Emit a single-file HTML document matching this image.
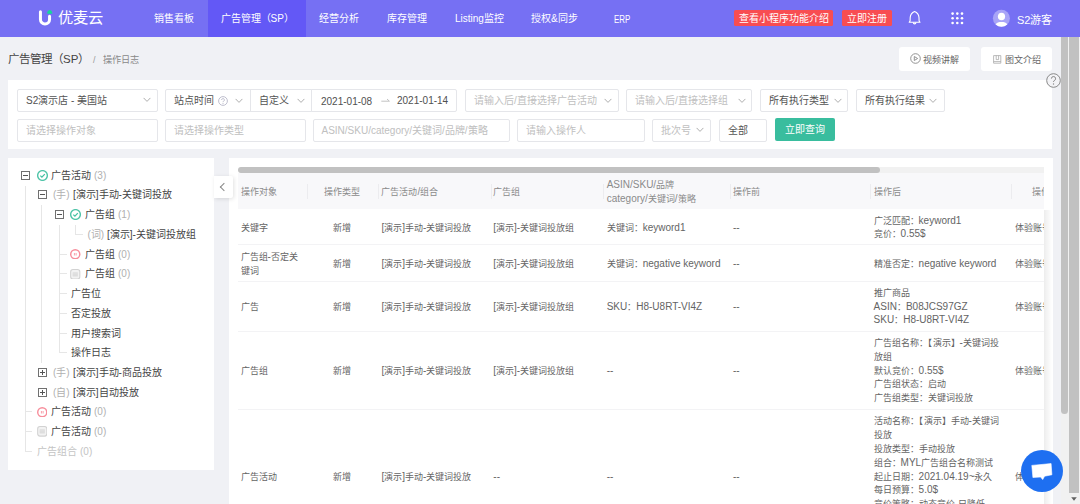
<!DOCTYPE html>
<html lang="zh-CN"><head><meta charset="utf-8">
<style>
*{margin:0;padding:0;box-sizing:border-box}
html,body{width:1080px;height:504px;overflow:hidden;background:#f0f1f5;font-family:"Liberation Sans",sans-serif;color:#333}
.a{position:absolute;white-space:nowrap}
#hdr{position:absolute;left:0;top:0;width:1080px;height:37.4px;background:#7670f3}
#hdr .act{position:absolute;left:208px;top:0;width:97.6px;height:37.4px;background:#6358f6}
.nav{position:absolute;top:11px;font-size:10px;line-height:16px;color:#fff}
.rbtn{position:absolute;top:9.7px;height:16.6px;background:#f84d52;border-radius:1.5px;color:#fff;font-size:10px;line-height:16.6px;padding-top:1px;text-align:center}
.panel{position:absolute;background:#fff}
.inp{position:absolute;height:23px;border:1px solid #e5e6ea;border-radius:2px;background:#fff;font-size:10px;line-height:21px;padding-left:8px;color:#535353;white-space:nowrap;overflow:hidden}
.ph{color:#c0c0c0}
.L{font-size:10px;line-height:0}
.btn2{position:absolute;top:47px;height:24px;background:#fff;border-radius:3px;font-size:9px;line-height:24px;color:#666}
</style></head><body>
<div id="hdr">
  <div class="act"></div>
  <svg class="a" style="left:37px;top:9px" width="17" height="18" viewBox="0 0 17 18">
    <path d="M3.45 2.8 V10.45 A4.55 4.55 0 0 0 12.55 10.45 V7.3" fill="none" stroke="#fff" stroke-width="3" stroke-linecap="round"/>
    <path d="M10.1 4.6 C10.1 2.2 11.5 1 12.7 1 C13.9 1 15.3 2.2 15.3 4.6 Q12.7 5.4 10.1 4.6 Z" fill="#16d69c"/>
  </svg>
  <div class="a" style="left:57.5px;top:7.6px;font-size:15.3px;line-height:20px;color:#fff">优麦云</div>
  <div class="nav" style="left:154px">销售看板</div>
  <div class="nav" style="left:220.5px">广告管理（SP）</div>
  <div class="nav" style="left:319px">经营分析</div>
  <div class="nav" style="left:387px">库存管理</div>
  <div class="nav" style="left:455px">Listing监控</div>
  <div class="nav" style="left:531px">授权&amp;同步</div>
  <div class="nav" style="left:613.5px;top:11px;font-size:11px;transform:scaleX(0.72);transform-origin:0 0">ERP</div>
  <div class="rbtn" style="left:734px;width:99px">查看小程序功能介绍</div>
  <div class="rbtn" style="left:842px;width:50px">立即注册</div>
  <svg class="a" style="left:907px;top:10px" width="15" height="16" viewBox="0 0 15 16">
    <path d="M7.6 1.6 C5.2 2.6 3.4 4.6 3.2 7.6 L3.1 10.9 L2.2 12.2 H13 L12.1 10.9 L12 7.6 C11.8 4.6 10 2.6 7.6 1.6 Z" fill="none" stroke="#fff" stroke-width="1.1" stroke-linejoin="round"/>
    <path d="M6.3 12.6 A1.3 1.3 0 0 0 8.9 12.6" fill="none" stroke="#fff" stroke-width="1.1"/>
  </svg>
  <svg class="a" style="left:951px;top:12px" width="13" height="13" viewBox="0 0 13 13" fill="#fff">
    <circle cx="1.6" cy="1.6" r="1.3"/><circle cx="6.3" cy="1.6" r="1.3"/><circle cx="11" cy="1.6" r="1.3"/>
    <circle cx="1.6" cy="6.3" r="1.3"/><circle cx="6.3" cy="6.3" r="1.3"/><circle cx="11" cy="6.3" r="1.3"/>
    <circle cx="1.6" cy="11" r="1.3"/><circle cx="6.3" cy="11" r="1.3"/><circle cx="11" cy="11" r="1.3"/>
  </svg>
  <svg class="a" style="left:992px;top:9px" width="18" height="18" viewBox="0 0 18 18">
    <circle cx="9.4" cy="9.2" r="8.5" fill="#a8a4f7"/>
    <ellipse cx="9.5" cy="7.5" rx="3.6" ry="3.8" fill="#fff"/>
    <path d="M3.6 15.4 C4.6 13.6 6.8 13 9.5 13 C12.2 13 14.4 13.6 15.3 15.4 A8.5 8.5 0 0 1 3.6 15.4 Z" fill="#fff"/>
  </svg>
  <div class="nav" style="left:1017px;top:11.7px;font-size:11px">S2游客</div>
</div>

<!-- breadcrumb -->
<div class="a" style="left:8px;top:51px;font-size:11.5px;line-height:17px;color:#444">广告管理（SP）</div>
<div class="a" style="left:93px;top:53px;font-size:9px;line-height:14px;color:#999">/</div><div class="a" style="left:102.5px;top:53px;font-size:9.2px;line-height:14px;color:#888">操作日志</div>
<div class="btn2" style="left:899px;width:71px"><svg class="a" style="left:10.5px;top:6.2px" width="11" height="11" viewBox="0 0 11 11"><circle cx="5.5" cy="5.5" r="4.8" fill="none" stroke="#888" stroke-width="0.9"/><path d="M4.3 3.5 L7.6 5.5 L4.3 7.5 Z" fill="none" stroke="#888" stroke-width="0.9" stroke-linejoin="round"/></svg><span class="a" style="left:23.5px;top:1.2px">视频讲解</span></div>
<div class="btn2" style="left:981px;width:71px"><svg class="a" style="left:11.5px;top:8px" width="9" height="9" viewBox="0 0 9 9"><path d="M0.6 0.6 H7.8 V8.2 H0.6 Z" fill="none" stroke="#aaa" stroke-width="0.8"/><path d="M3.2 0.6 V4.6 H5.6 V0.6" fill="none" stroke="#aaa" stroke-width="0.8"/><path d="M0.6 6.6 H7.8" stroke="#aaa" stroke-width="0.8"/></svg><span class="a" style="left:24px;top:1.2px">图文介绍</span></div>

<!-- filter panel -->
<div class="panel" style="left:8px;top:80px;width:1044px;height:69px"></div>
<svg class="a" style="left:1045.5px;top:73px;z-index:2" width="15" height="15" viewBox="0 0 15 15"><circle cx="7.5" cy="7.5" r="6.8" fill="#f3f3f6" stroke="#888" stroke-width="1"/><path d="M5.4 5.6 A2.1 2.1 0 1 1 8.2 7.6 Q7.5 8 7.5 9" fill="none" stroke="#888" stroke-width="1"/><circle cx="7.5" cy="11" r="0.7" fill="#888"/></svg><!--x-->


<!-- filter row 1 -->
<div class="inp" style="left:17px;top:89px;width:141px">S2演示店 - 美国站</div>
<div class="inp" style="left:165px;top:89px;width:86px;border-radius:2px 0 0 2px">站点时间<svg class="a" style="left:52px;top:6px" width="10" height="10" viewBox="0 0 10 10"><circle cx="5" cy="5" r="4.4" fill="none" stroke="#b8b8c8" stroke-width="0.9"/><path d="M3.6 4 A1.4 1.4 0 1 1 5.4 5.3 Q5 5.5 5 6.2" fill="none" stroke="#b8b8c8" stroke-width="0.9"/><circle cx="5" cy="7.6" r="0.55" fill="#b8b8c8"/></svg></div>
<div class="inp" style="left:250px;top:89px;width:62px;border-radius:0">自定义</div>
<div class="inp" style="left:311px;top:89px;width:146px;border-radius:0 2px 2px 0;padding-left:9px;padding-top:1px;color:#505050">2021-01-08<svg style="position:absolute;left:68.5px;top:8px" width="9" height="5" viewBox="0 0 9 5"><path d="M0.3 3.2 H8.4 L6 1" fill="none" stroke="#bbb" stroke-width="0.9"/></svg><span style="position:absolute;left:85px;top:0">2021-01-14</span></div>
<div class="inp ph" style="left:465px;top:89px;width:154px">请输入后/直接选择广告活动</div>
<div class="inp ph" style="left:626px;top:89px;width:126px">请输入后/直接选择组</div>
<div class="inp" style="left:760px;top:89px;width:88px">所有执行类型</div>
<div class="inp" style="left:856px;top:89px;width:89px">所有执行结果</div>
<!-- filter row 2 -->
<div class="inp ph" style="left:17px;top:118.5px;width:141px">请选择操作对象</div>
<div class="inp ph" style="left:165px;top:118.5px;width:141px">请选择操作类型</div>
<div class="inp ph" style="left:312.5px;top:118.5px;width:197px">ASIN/SKU/category/关键词/品牌/策略</div>
<div class="inp ph" style="left:516.5px;top:118.5px;width:128px">请输入操作人</div>
<div class="inp ph" style="left:652px;top:118.5px;width:59px">批次号</div>
<div class="inp" style="left:718.5px;top:118.5px;width:48px;color:#555">全部</div>
<div class="a" style="left:774.5px;top:118.3px;width:60px;height:22.5px;background:#39bd9e;border-radius:2px;color:#fff;font-size:10px;line-height:22.5px;padding-top:1px;text-align:center">立即查询</div>

<svg class="a" style="left:142.8px;top:97.3px" width="8" height="6" viewBox="0 0 8 6"><path d="M0.6 0.9 L4 4.4 L7.4 0.9" fill="none" stroke="#adadad" stroke-width="1"/></svg>
<svg class="a" style="left:235.4px;top:97.6px" width="8" height="6" viewBox="0 0 8 6"><path d="M0.6 0.9 L4 4.4 L7.4 0.9" fill="none" stroke="#adadad" stroke-width="1"/></svg>
<svg class="a" style="left:296.5px;top:97.6px" width="8" height="6" viewBox="0 0 8 6"><path d="M0.6 0.9 L4 4.4 L7.4 0.9" fill="none" stroke="#adadad" stroke-width="1"/></svg>
<svg class="a" style="left:603.9px;top:97.6px" width="8" height="6" viewBox="0 0 8 6"><path d="M0.6 0.9 L4 4.4 L7.4 0.9" fill="none" stroke="#adadad" stroke-width="1"/></svg>
<svg class="a" style="left:737.5px;top:97.6px" width="8" height="6" viewBox="0 0 8 6"><path d="M0.6 0.9 L4 4.4 L7.4 0.9" fill="none" stroke="#adadad" stroke-width="1"/></svg>
<svg class="a" style="left:833.7px;top:97.6px" width="8" height="6" viewBox="0 0 8 6"><path d="M0.6 0.9 L4 4.4 L7.4 0.9" fill="none" stroke="#adadad" stroke-width="1"/></svg>
<svg class="a" style="left:929.0px;top:97.6px" width="8" height="6" viewBox="0 0 8 6"><path d="M0.6 0.9 L4 4.4 L7.4 0.9" fill="none" stroke="#adadad" stroke-width="1"/></svg>
<svg class="a" style="left:695.5px;top:127.1px" width="8" height="6" viewBox="0 0 8 6"><path d="M0.6 0.9 L4 4.4 L7.4 0.9" fill="none" stroke="#adadad" stroke-width="1"/></svg>
<!-- tree panel -->
<div class="panel" style="left:8px;top:157.5px;width:206px;height:312px"></div>

<div class="a" style="left:24.5px;top:186px;width:1px;height:265.5px;background:#e6e6e6"></div>
<div class="a" style="left:41px;top:205px;width:1px;height:157.5px;background:#e6e6e6"></div>
<div class="a" style="left:58.5px;top:225px;width:1px;height:127.5px;background:#e6e6e6"></div>
<div class="a" style="left:75px;top:225px;width:1px;height:9.5px;background:#e6e6e6"></div>
<div class="a" style="left:75px;top:233.9px;width:8px;height:1px;background:#e6e6e6"></div>
<div class="a" style="left:58.5px;top:253.6px;width:8.0px;height:1px;background:#e6e6e6"></div>
<div class="a" style="left:58.5px;top:273.3px;width:8.0px;height:1px;background:#e6e6e6"></div>
<div class="a" style="left:58.5px;top:293.0px;width:8.0px;height:1px;background:#e6e6e6"></div>
<div class="a" style="left:58.5px;top:312.7px;width:8.0px;height:1px;background:#e6e6e6"></div>
<div class="a" style="left:58.5px;top:332.5px;width:8.0px;height:1px;background:#e6e6e6"></div>
<div class="a" style="left:58.5px;top:352.2px;width:8.0px;height:1px;background:#e6e6e6"></div>
<div class="a" style="left:24.5px;top:411.3px;width:7.5px;height:1px;background:#e6e6e6"></div>
<div class="a" style="left:24.5px;top:431.1px;width:7.5px;height:1px;background:#e6e6e6"></div>
<div class="a" style="left:24.5px;top:450.8px;width:7.5px;height:1px;background:#e6e6e6"></div>
<div class="a" style="left:21px;top:170.7px;width:9px;height:9px;border:1px solid #707070;background:#fff"><i style="position:absolute;left:1px;top:3px;width:5px;height:1px;background:#555"></i></div>
<svg class="a" style="left:36.5px;top:169.9px" width="11" height="11" viewBox="0 0 11 11"><circle cx="5.5" cy="5.5" r="4.85" fill="none" stroke="#4fc4a8" stroke-width="1.4"/><path d="M3.3 5.6 L4.9 7.1 L7.8 4.1" fill="none" stroke="#45c2a3" stroke-width="1.3"/></svg>
<div class="a" style="left:51px;top:168.7px;font-size:10px;line-height:14px;color:#444">广告活动</div>
<div class="a" style="left:94px;top:168.7px;font-size:10px;line-height:14px;color:#b0b0b0">(3)</div>
<div class="a" style="left:38px;top:190.4px;width:9px;height:9px;border:1px solid #707070;background:#fff"><i style="position:absolute;left:1px;top:3px;width:5px;height:1px;background:#555"></i></div>
<div class="a" style="left:53px;top:188.4px;font-size:10px;line-height:14px;color:#b0b0b0">(手)</div>
<div class="a" style="left:73px;top:188.4px;font-size:10px;line-height:14px;color:#444">[演示]手动-关键词投放</div>
<div class="a" style="left:55px;top:210.1px;width:9px;height:9px;border:1px solid #707070;background:#fff"><i style="position:absolute;left:1px;top:3px;width:5px;height:1px;background:#555"></i></div>
<svg class="a" style="left:70.3px;top:209.4px" width="11" height="11" viewBox="0 0 11 11"><circle cx="5.5" cy="5.5" r="4.85" fill="none" stroke="#4fc4a8" stroke-width="1.4"/><path d="M3.3 5.6 L4.9 7.1 L7.8 4.1" fill="none" stroke="#45c2a3" stroke-width="1.3"/></svg>
<div class="a" style="left:85px;top:208.1px;font-size:10px;line-height:14px;color:#444">广告组</div>
<div class="a" style="left:118px;top:208.1px;font-size:10px;line-height:14px;color:#b0b0b0">(1)</div>
<div class="a" style="left:87.5px;top:227.9px;font-size:10px;line-height:14px;color:#b0b0b0">(词)</div>
<div class="a" style="left:107px;top:227.9px;font-size:10px;line-height:14px;color:#444">[演示]-关键词投放组</div>
<svg class="a" style="left:70.3px;top:248.8px" width="10.5" height="10.5" viewBox="0 0 11 11"><circle cx="5.5" cy="5.5" r="4.75" fill="none" stroke="#f78d9b" stroke-width="1.5"/><path d="M4.6 4.2 V6.8 M6.4 4.2 V6.8" fill="none" stroke="#f78d9b" stroke-width="0.9"/></svg>
<div class="a" style="left:85px;top:247.6px;font-size:10px;line-height:14px;color:#444">广告组</div>
<div class="a" style="left:118px;top:247.6px;font-size:10px;line-height:14px;color:#b0b0b0">(0)</div>
<svg class="a" style="left:70.3px;top:268.5px" width="10.5" height="10.5" viewBox="0 0 11 11"><rect x="0.7" y="0.6" width="9.6" height="10" rx="2.4" fill="#f2f2f2" stroke="#d2d2d2" stroke-width="1.1"/><rect x="2.8" y="3.6" width="5.4" height="4.2" fill="#d9d9d9"/><path d="M2.8 5 H8.2 M2.8 6.4 H8.2" stroke="#ececec" stroke-width="0.5"/></svg>
<div class="a" style="left:85px;top:267.3px;font-size:10px;line-height:14px;color:#444">广告组</div>
<div class="a" style="left:118px;top:267.3px;font-size:10px;line-height:14px;color:#b0b0b0">(0)</div>
<div class="a" style="left:70.5px;top:287.0px;font-size:10px;line-height:14px;color:#444">广告位</div>
<div class="a" style="left:70.5px;top:306.7px;font-size:10px;line-height:14px;color:#444">否定投放</div>
<div class="a" style="left:70.5px;top:326.5px;font-size:10px;line-height:14px;color:#444">用户搜索词</div>
<div class="a" style="left:70.5px;top:346.2px;font-size:10px;line-height:14px;color:#444">操作日志</div>
<div class="a" style="left:38px;top:367.9px;width:9px;height:9px;border:1px solid #707070;background:#fff"><i style="position:absolute;left:1px;top:3px;width:5px;height:1px;background:#555"></i><i style="position:absolute;left:3px;top:1px;width:1px;height:5px;background:#555"></i></div>
<div class="a" style="left:53px;top:365.9px;font-size:10px;line-height:14px;color:#b0b0b0">(手)</div>
<div class="a" style="left:73px;top:365.9px;font-size:10px;line-height:14px;color:#444">[演示]手动-商品投放</div>
<div class="a" style="left:38px;top:387.6px;width:9px;height:9px;border:1px solid #707070;background:#fff"><i style="position:absolute;left:1px;top:3px;width:5px;height:1px;background:#555"></i><i style="position:absolute;left:3px;top:1px;width:1px;height:5px;background:#555"></i></div>
<div class="a" style="left:53px;top:385.6px;font-size:10px;line-height:14px;color:#b0b0b0">(自)</div>
<div class="a" style="left:73px;top:385.6px;font-size:10px;line-height:14px;color:#444">[演示]自动投放</div>
<svg class="a" style="left:36.5px;top:406.6px" width="10.5" height="10.5" viewBox="0 0 11 11"><circle cx="5.5" cy="5.5" r="4.75" fill="none" stroke="#f78d9b" stroke-width="1.5"/><path d="M4.6 4.2 V6.8 M6.4 4.2 V6.8" fill="none" stroke="#f78d9b" stroke-width="0.9"/></svg>
<div class="a" style="left:51px;top:405.3px;font-size:10px;line-height:14px;color:#444">广告活动</div>
<div class="a" style="left:94px;top:405.3px;font-size:10px;line-height:14px;color:#b0b0b0">(0)</div>
<svg class="a" style="left:36.5px;top:426.3px" width="10.5" height="10.5" viewBox="0 0 11 11"><rect x="0.7" y="0.6" width="9.6" height="10" rx="2.4" fill="#f2f2f2" stroke="#d2d2d2" stroke-width="1.1"/><rect x="2.8" y="3.6" width="5.4" height="4.2" fill="#d9d9d9"/><path d="M2.8 5 H8.2 M2.8 6.4 H8.2" stroke="#ececec" stroke-width="0.5"/></svg>
<div class="a" style="left:51px;top:425.1px;font-size:10px;line-height:14px;color:#444">广告活动</div>
<div class="a" style="left:94px;top:425.1px;font-size:10px;line-height:14px;color:#b0b0b0">(0)</div>
<div class="a" style="left:36.5px;top:444.8px;font-size:10px;line-height:14px;color:#c4c4c4">广告组合</div>
<div class="a" style="left:80px;top:444.8px;font-size:10px;line-height:14px;color:#c4c4c4">(0)</div>
<!-- table panel -->
<div class="panel" style="left:228.5px;top:157.5px;width:824px;height:350px"></div>

<div class="a" style="left:0;top:0;width:1044px;height:504px;overflow:hidden">
<div class="a" style="left:240px;top:167px;width:804px;height:6.3px;background:#f1f1f1"></div>
<div class="a" style="left:237.6px;top:167px;width:642px;height:6.3px;background:#c1c1c1;border-radius:3.2px"></div>
<div class="a" style="left:238px;top:173.3px;width:806px;height:36.2px;background:#f8f8fa"></div>
<div class="a" style="left:307.2px;top:183.5px;width:1px;height:15px;background:#ececef"></div>
<div class="a" style="left:377.8px;top:183.5px;width:1px;height:15px;background:#ececef"></div>
<div class="a" style="left:490.5px;top:183.5px;width:1px;height:15px;background:#ececef"></div>
<div class="a" style="left:603.3px;top:183.5px;width:1px;height:15px;background:#ececef"></div>
<div class="a" style="left:729.7px;top:183.5px;width:1px;height:15px;background:#ececef"></div>
<div class="a" style="left:870.3px;top:183.5px;width:1px;height:15px;background:#ececef"></div>
<div class="a" style="left:1011.4px;top:183.5px;width:1px;height:15px;background:#ececef"></div>
<div class="a" style="left:238px;top:244.3px;width:806px;height:1px;background:#f3f3f5"></div>
<div class="a" style="left:238px;top:280.8px;width:806px;height:1px;background:#f3f3f5"></div>
<div class="a" style="left:238px;top:330.8px;width:806px;height:1px;background:#f3f3f5"></div>
<div class="a" style="left:238px;top:408.8px;width:806px;height:1px;background:#f3f3f5"></div>
<div class="a" style="left:240.5px;top:186.07px;font-size:9px;line-height:13.85px;color:#8a8a8a">操作对象</div>
<div class="a" style="left:307.2px;top:186.07px;width:70.6px;text-align:center;font-size:9px;line-height:13.85px;color:#8a8a8a">操作类型</div>
<div class="a" style="left:381.4px;top:186.07px;font-size:9px;line-height:13.85px;color:#8a8a8a">广告活动<span class="L">/</span>组合</div>
<div class="a" style="left:493.3px;top:186.07px;font-size:9px;line-height:13.85px;color:#8a8a8a">广告组</div>
<div class="a" style="left:606.7px;top:179.15px;font-size:9px;line-height:13.85px;color:#8a8a8a"><span class="L">ASIN/SKU/</span>品牌<br><span class="L">category/</span>关键词<span class="L">/</span>策略</div>
<div class="a" style="left:733px;top:186.07px;font-size:9px;line-height:13.85px;color:#8a8a8a">操作前</div>
<div class="a" style="left:873.6px;top:186.07px;font-size:9px;line-height:13.85px;color:#8a8a8a">操作后</div>
<div class="a" style="left:1011.4px;top:186.07px;width:60px;text-align:center;font-size:9px;line-height:13.85px;color:#8a8a8a">操作</div>
<div class="a" style="left:240.5px;top:221.57px;font-size:9px;line-height:13.85px;color:#646464">关键字</div>
<div class="a" style="left:307.2px;top:221.57px;width:70.6px;text-align:center;font-size:9px;line-height:13.85px;color:#646464">新增</div>
<div class="a" style="left:381.4px;top:221.57px;font-size:9px;line-height:13.85px;color:#646464"><span class="L">[</span>演示<span class="L">]</span>手动<span class="L">-</span>关键词投放</div>
<div class="a" style="left:493.3px;top:221.57px;font-size:9px;line-height:13.85px;color:#646464"><span class="L">[</span>演示<span class="L">]-</span>关键词投放组</div>
<div class="a" style="left:606.7px;top:221.57px;font-size:9px;line-height:13.85px;color:#646464">关键词：<span class="L">keyword1</span></div>
<div class="a" style="left:733px;top:221.57px;font-size:9px;line-height:13.85px;color:#646464"><span class="L">--</span></div>
<div class="a" style="left:873.6px;top:214.65px;font-size:9px;line-height:13.85px;color:#646464">广泛匹配：<span class="L">keyword1</span><br>竞价：<span class="L">0.55$</span></div>
<div class="a" style="left:1014.7px;top:221.57px;font-size:9px;line-height:13.85px;color:#646464">体验账号</div>
<div class="a" style="left:240.5px;top:251.25px;font-size:9px;line-height:13.85px;color:#646464">广告组<span class="L">-</span>否定关<br>键词</div>
<div class="a" style="left:307.2px;top:258.18px;width:70.6px;text-align:center;font-size:9px;line-height:13.85px;color:#646464">新增</div>
<div class="a" style="left:381.4px;top:258.18px;font-size:9px;line-height:13.85px;color:#646464"><span class="L">[</span>演示<span class="L">]</span>手动<span class="L">-</span>关键词投放</div>
<div class="a" style="left:493.3px;top:258.18px;font-size:9px;line-height:13.85px;color:#646464"><span class="L">[</span>演示<span class="L">]-</span>关键词投放组</div>
<div class="a" style="left:606.7px;top:258.18px;font-size:9px;line-height:13.85px;color:#646464">关键词：<span class="L">negative keyword</span></div>
<div class="a" style="left:733px;top:258.18px;font-size:9px;line-height:13.85px;color:#646464"><span class="L">--</span></div>
<div class="a" style="left:873.6px;top:258.18px;font-size:9px;line-height:13.85px;color:#646464">精准否定：<span class="L">negative keyword</span></div>
<div class="a" style="left:1014.7px;top:258.18px;font-size:9px;line-height:13.85px;color:#646464">体验账号</div>
<div class="a" style="left:240.5px;top:300.57px;font-size:9px;line-height:13.85px;color:#646464">广告</div>
<div class="a" style="left:307.2px;top:300.57px;width:70.6px;text-align:center;font-size:9px;line-height:13.85px;color:#646464">新增</div>
<div class="a" style="left:381.4px;top:300.57px;font-size:9px;line-height:13.85px;color:#646464"><span class="L">[</span>演示<span class="L">]</span>手动<span class="L">-</span>关键词投放</div>
<div class="a" style="left:493.3px;top:300.57px;font-size:9px;line-height:13.85px;color:#646464"><span class="L">[</span>演示<span class="L">]-</span>关键词投放组</div>
<div class="a" style="left:606.7px;top:300.57px;font-size:9px;line-height:13.85px;color:#646464"><span class="L">SKU</span>：<span class="L">H8-U8RT-VI4Z</span></div>
<div class="a" style="left:733px;top:300.57px;font-size:9px;line-height:13.85px;color:#646464"><span class="L">--</span></div>
<div class="a" style="left:873.6px;top:286.73px;font-size:9px;line-height:13.85px;color:#646464">推广商品<br><span class="L">ASIN</span>：<span class="L">B08JCS97GZ</span><br><span class="L">SKU</span>：<span class="L">H8-U8RT-VI4Z</span></div>
<div class="a" style="left:1014.7px;top:300.57px;font-size:9px;line-height:13.85px;color:#646464">体验账号</div>
<div class="a" style="left:240.5px;top:364.57px;font-size:9px;line-height:13.85px;color:#646464">广告组</div>
<div class="a" style="left:307.2px;top:364.57px;width:70.6px;text-align:center;font-size:9px;line-height:13.85px;color:#646464">新增</div>
<div class="a" style="left:381.4px;top:364.57px;font-size:9px;line-height:13.85px;color:#646464"><span class="L">[</span>演示<span class="L">]</span>手动<span class="L">-</span>关键词投放</div>
<div class="a" style="left:493.3px;top:364.57px;font-size:9px;line-height:13.85px;color:#646464"><span class="L">[</span>演示<span class="L">]-</span>关键词投放组</div>
<div class="a" style="left:606.7px;top:364.57px;font-size:9px;line-height:13.85px;color:#646464"><span class="L">--</span></div>
<div class="a" style="left:733px;top:364.57px;font-size:9px;line-height:13.85px;color:#646464"><span class="L">--</span></div>
<div class="a" style="left:873.6px;top:336.88px;font-size:9px;line-height:13.85px;color:#646464">广告组名称：【演示】<span class="L">-</span>关键词投<br>放组<br>默认竞价：<span class="L">0.55$</span><br>广告组状态：启动<br>广告组类型：关键词投放</div>
<div class="a" style="left:1014.7px;top:364.57px;font-size:9px;line-height:13.85px;color:#646464">体验账号</div>
<div class="a" style="left:240.5px;top:470.57px;font-size:9px;line-height:13.85px;color:#646464">广告活动</div>
<div class="a" style="left:307.2px;top:470.57px;width:70.6px;text-align:center;font-size:9px;line-height:13.85px;color:#646464">新增</div>
<div class="a" style="left:381.4px;top:470.57px;font-size:9px;line-height:13.85px;color:#646464"><span class="L">[</span>演示<span class="L">]</span>手动<span class="L">-</span>关键词投放</div>
<div class="a" style="left:493.3px;top:470.57px;font-size:9px;line-height:13.85px;color:#646464"><span class="L">--</span></div>
<div class="a" style="left:606.7px;top:470.57px;font-size:9px;line-height:13.85px;color:#646464"><span class="L">--</span></div>
<div class="a" style="left:733px;top:470.57px;font-size:9px;line-height:13.85px;color:#646464"><span class="L">--</span></div>
<div class="a" style="left:873.6px;top:415.18px;font-size:9px;line-height:13.85px;color:#646464">活动名称：【演示】手动<span class="L">-</span>关键词<br>投放<br>投放类型：手动投放<br>组合：<span class="L">MYL</span>广告组合名称测试<br>起止日期：<span class="L">2021.04.19~</span>永久<br>每日预算：<span class="L">5.0$</span><br>竞价策略：动态竞价<span class="L">-</span>只降低<br>广告位：<span class="L">--</span><br>商品页面：<span class="L">0</span>%</div>
<div class="a" style="left:1014.7px;top:470.57px;font-size:9px;line-height:13.85px;color:#646464">体验账号</div>
</div>
<div class="a" style="left:1044px;top:209.5px;width:8px;height:295px;background:linear-gradient(to right,rgba(0,0,0,0.07),rgba(0,0,0,0))"></div>
<div class="a" style="left:214px;top:176.2px;width:19px;height:22px;background:#fff;border-radius:0 2px 2px 0;box-shadow:1px 1px 4px rgba(0,0,0,0.12)"><i style="position:absolute;left:7px;top:7.5px;width:6px;height:6px;border-left:1px solid #888;border-bottom:1px solid #888;transform:rotate(45deg)"></i></div>
<!-- scrollbars -->
<div class="a" style="left:1061px;top:37px;width:8px;height:467px;background:#f1f1f1"></div>
<div class="a" style="left:1061px;top:37px;width:7px;height:377px;background:#c1c1c1;border-radius:0 0 4px 4px"></div>
<div class="a" style="left:1069px;top:37px;width:11px;height:467px;background:#f1f1f1"></div>
<div class="a" style="left:1069px;top:37px;width:10px;height:456px;background:#c1c1c1"></div>

<svg class="a" style="left:1071px;top:497px" width="6" height="4" viewBox="0 0 6 4"><path d="M0.2 0.3 H5.8 L3 3.7 Z" fill="#606060"/></svg>
<!-- chat -->
<svg class="a" style="left:1021px;top:450px" width="42" height="42" viewBox="0 0 42 42">
  <circle cx="21" cy="21" r="21" fill="#1e6ff1"/>
  <path d="M10.8 15.4 L30.1 13.6 L30.9 24.8 L23.6 26.2 L21.7 29.6 L19.6 27 L11.9 27.5 Z" fill="#fff" stroke="#fff" stroke-width="0.6" stroke-linejoin="round"/>
</svg>
</body></html>
